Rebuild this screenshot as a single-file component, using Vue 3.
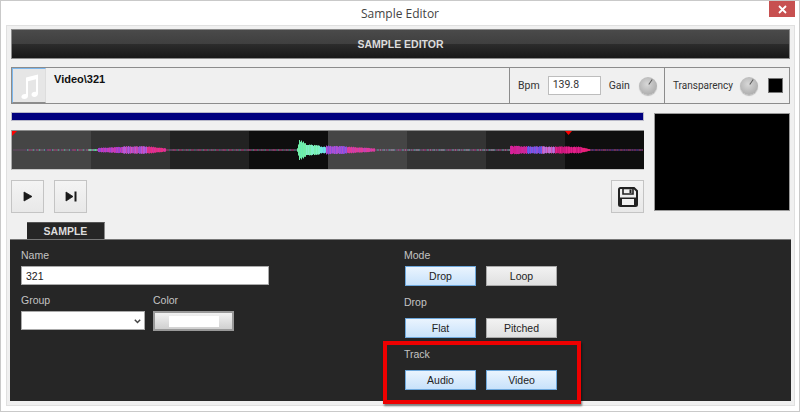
<script setup>
// waveform pieces: start x, end x, amplitude at start, at end, colours (x is px inside the strip)
const pieces = [
  [14, 76, 0.6, 0.6, ['#6a5a6a', '#4a3a70', '#b03070', '#707070', '#50c0a0']],
  [76, 86, 0.7, 1, ['#80d0a8', '#50c090', '#d040b0']],
  [86, 110, 2, 3, ['#c83ab8', '#a040d0', '#c040c0']],
  [110, 135, 3.5, 3.5, ['#a050d0', '#b858d8', '#c848b0']],
  [135, 154, 3.5, 1.5, ['#e0309a', '#d83090', '#e83080']],
  [154, 285, 0.6, 0.6, ['#903060', '#605070', '#b03070', '#707080', '#308070']],
  [285, 288, 2, 13, ['#70f0a8']],
  [288, 294, 9, 6, ['#70f0a8', '#68eeb0']],
  [294, 308, 5.5, 4, ['#78f0b0', '#80f0c8']],
  [308, 314, 3.5, 3, ['#70e8e0', '#70d0f0']],
  [314, 335, 4, 3.5, ['#a050d8', '#8a50e0', '#b050d0']],
  [335, 363, 3.2, 1.5, ['#c840b0', '#d83ca0', '#e03c98']],
  [363, 498, 0.6, 0.6, ['#9a8aa0', '#605070', '#a03070', '#708090', '#50a0a0']],
  [498, 515, 4, 3.5, ['#d02090', '#c82898', '#d8209a']],
  [515, 530, 3.5, 3.5, ['#7050e0', '#6060f0', '#9050d8']],
  [530, 543, 3.5, 3, ['#b060d0', '#c070d8', '#d050b0']],
  [543, 570, 3.5, 3, ['#d01880', '#e02088', '#c81878']],
  [570, 578, 2.5, 0.6, ['#e82078']],
  [578, 631, 0.6, 0.5, ['#903060', '#403080', '#802060', '#302880']]
]

const bars = []
let seed = 7
for (const [x0, x1, a0, a1, colors] of pieces) {
  for (let x = x0; x < x1; x++) {
    seed = (seed * 31 + 11) % 101
    const t = (x - x0) / (x1 - x0)
    const amp = (a0 + (a1 - a0) * t) * (0.85 + (seed % 30) / 100)
    bars.push({ x, y: 19 - amp, h: amp * 2, color: colors[seed % colors.length] })
  }
}
</script>

<template>
  <div class="window">
    <div class="titlebar">
      <span>Sample Editor</span>
      <div class="close">
        <svg width="9" height="9" viewBox="0 0 9 9"><path d="M1 1l7 7M8 1l-7 7" stroke="#fff" stroke-width="1.8" /></svg>
      </div>
    </div>

    <div class="panel">
      <div class="header">SAMPLE EDITOR</div>

      <div class="toolbar">
        <div class="sample-info">
          <button class="note-btn">
            <svg width="20" height="26" viewBox="0 0 20 26">
              <path d="M7 4.500L19 1.500V20.500C19 22.600 17.300 24 15.400 24C13.600 24 12.500 22.900 12.500 21.600C12.500 19.800 14.400 18.600 17 18.900V6.200L9 8.200V23C9 25 7.300 26 5.400 26C3.500 26 2.400 25 2.400 23.700C2.400 21.900 4.400 20.700 7 21Z" fill="#fff" />
            </svg>
          </button>
          <span class="sample-path">Video\321</span>
        </div>
        <div class="bpm-group">
          <span>Bpm</span>
          <input class="bpm-input" value="139.8" />
          <span>Gain</span>
          <div class="knob"><i></i></div>
        </div>
        <div class="trans-group">
          <span>Transparency</span>
          <div class="knob trans-knob"><i></i></div>
          <div class="swatch"></div>
        </div>
      </div>

      <div class="main-row">
        <div class="left-col">
          <div class="blue-bar"></div>
          <div class="wave">
            <div class="wave-bands">
              <div v-for="c in ['b1', 'b2', 'b3', 'b4', 'b1', 'b2', 'b3', 'b4']" :class="c"></div>
            </div>
            <svg class="wave-svg" width="632" height="38" viewBox="0 0 632 38">
              <rect x="1" y="18.500" width="630" height="1" fill="#6a4a68" />
              <rect v-for="b in bars" :key="b.x" :x="b.x" :y="b.y" width="1" :height="b.h" :fill="b.color" />
              <path d="M0 0h5L0 5Z" fill="#f00" />
              <path d="M553 0h7l-3.500 4Z" fill="#f00" />
            </svg>
          </div>
          <div class="transport">
            <div class="transport-left">
              <button class="icon-btn">
                <svg width="10" height="11" viewBox="0 0 10 11"><path d="M1 1L9 5.500L1 10Z" fill="#1a1a1a" stroke="#1a1a1a" stroke-width="0.8" /></svg>
              </button>
              <button class="icon-btn">
                <svg width="12" height="11" viewBox="0 0 12 11"><path d="M1 1L8 5.500L1 10Z" fill="#1a1a1a" stroke="#1a1a1a" stroke-width="0.8" /><rect x="9.500" y="0.500" width="2" height="10" fill="#1a1a1a" /></svg>
              </button>
            </div>
            <button class="icon-btn">
              <svg width="20" height="20" viewBox="0 0 20 20">
                <path d="M2.500 1H16L19 4V17.500C19 18.300 18.300 19 17.500 19H2.500C1.700 19 1 18.300 1 17.500V2.500C1 1.700 1.700 1 2.500 1Z" fill="none" stroke="#222" stroke-width="2" />
                <path d="M5 1.500H15V7H5Z" fill="#f0f0f0" stroke="#222" stroke-width="1.600" />
                <rect x="11.500" y="2.500" width="2" height="3.500" fill="#222" />
                <path d="M1 10.500H19V18H1Z" fill="#222" />
                <rect x="4" y="12" width="12" height="6" fill="#f2f2f2" />
              </svg>
            </button>
          </div>
        </div>
        <div class="preview"></div>
      </div>

      <div class="tab">SAMPLE</div>
      <div class="dark">
        <div class="fields">
          <label class="lbl">Name</label>
          <input class="name-input" value="321" />
          <div class="field-row">
            <div class="field">
              <label class="lbl">Group</label>
              <div class="select-wrap">
                <select class="group-select"></select>
                <svg class="chevron" width="7" height="5" viewBox="0 0 7 5"><path d="M0.800 0.800L3.500 3.500L6.200 0.800" fill="none" stroke="#444" stroke-width="1.500" /></svg>
              </div>
            </div>
            <div class="field">
              <label class="lbl">Color</label>
              <div class="color-btn"><div></div></div>
            </div>
          </div>
        </div>
        <div class="modes">
          <label class="lbl">Mode</label>
          <div class="btn-row">
            <button class="opt on">Drop</button>
            <button class="opt">Loop</button>
          </div>
          <label class="lbl drop-lbl">Drop</label>
          <div class="btn-row">
            <button class="opt on">Flat</button>
            <button class="opt">Pitched</button>
          </div>
          <label class="lbl track-lbl">Track</label>
          <div class="btn-row">
            <button class="opt on">Audio</button>
            <button class="opt on">Video</button>
          </div>
        </div>
      </div>
    </div>

    <div class="highlight"></div>
  </div>
</template>

<style>
html, body {
  margin: 0;
  background: #fff;
}
</style>

<style scoped>
.window {
  position: relative;
  box-sizing: border-box;
  width: 800px;
  height: 412px;
  background: #fff;
  border: 1px solid #c9c9c9;
  overflow: hidden;
  display: flex;
  flex-direction: column;
  font-family: "Liberation Sans", Arial, sans-serif;
  font-size: 11px;
  color: #222;
}

.titlebar {
  position: relative;
  height: 24px;
  flex: none;
  display: flex;
  align-items: center;
  justify-content: center;
  font-family: "Open Sans", sans-serif;
  font-size: 12px;
  color: #444;
}

/* window close sits over the title bar */
.close {
  position: absolute;
  top: 0;
  right: 4px;
  width: 26px;
  height: 16px;
  background: #c75050;
  display: flex;
  align-items: center;
  justify-content: center;
}

.panel {
  flex: 1;
  margin: 0 4px 5px 5px;
  padding: 3px 4px 4px;
  background: #f0f0f0;
  border: 1px solid #e0e0e0;
  display: flex;
  flex-direction: column;
}

.header {
  height: 28px;
  flex: none;
  border: 1px solid #8c8c8c;
  background: linear-gradient(#4a4a4a, #3f3f3f 50%, #2c2c2c 50%, #181818);
  color: #dcdcdc;
  font-size: 10.5px;
  font-weight: bold;
  display: flex;
  align-items: center;
  justify-content: center;
}

.toolbar {
  height: 35px;
  flex: none;
  margin-top: 8px;
  border: 1px solid #8c8c8c;
  display: flex;
}

.sample-info {
  flex: 1;
  display: flex;
  align-items: flex-start;
  gap: 8px;
}

.note-btn {
  width: 34px;
  height: 35px;
  padding: 0;
  flex: none;
  background: #e6e6e6;
  border: 1px solid #7db8ee;
  border-right-color: #ddd;
  border-bottom: 1px solid #8c8c8c;
  display: flex;
  align-items: center;
  justify-content: center;
}

.sample-path {
  margin-top: 5px;
  font-weight: bold;
  color: #111;
}

.bpm-group,
.trans-group {
  flex: none;
  box-sizing: border-box;
  display: flex;
  align-items: center;
  padding-left: 8px;
  border-left: 1px solid #8c8c8c;
  font-family: Roboto, sans-serif;
  color: #333;
}

.bpm-group {
  width: 155px;
  font-size: 10.5px;
}

.trans-group {
  width: 125px;
  font-size: 10px;
}

.bpm-input {
  box-sizing: border-box;
  width: 53px;
  height: 19px;
  margin: 0 8px 0 8px;
  padding: 0 0 3px 4px;
  border: 1px solid #bdbdbd;
  background: #fff;
  font-family: Roboto, sans-serif;
  font-size: 10.5px;
  color: #333;
}

.knob {
  position: relative;
  flex: none;
  width: 18px;
  height: 18px;
  margin-left: 9px;
  border-radius: 50%;
  background: radial-gradient(circle at 45% 40%, #d8d8d8, #b0b0b0 70%, #999);
  box-shadow: 0 1px 1px #bbb;
}

.trans-knob {
  margin-left: 7px;
}

/* pointer mark on the dial */
.knob i {
  position: absolute;
  top: 2px;
  left: 11px;
  width: 1px;
  height: 6px;
  background: #555;
  transform: rotate(35deg);
}

.swatch {
  flex: none;
  box-sizing: border-box;
  width: 15px;
  height: 15px;
  margin-left: 10px;
  background: #000;
  border: 1px solid #777;
}

.main-row {
  display: flex;
  justify-content: space-between;
  margin-top: 8px;
  flex: none;
}

.left-col {
  width: 633px;
}

.blue-bar {
  box-sizing: border-box;
  height: 9px;
  background: #00007f;
  border: 1px solid #b8b8c8;
}

.wave {
  position: relative;
  box-sizing: border-box;
  height: 40px;
  margin-top: 9px;
  border-top: 1px solid #8c8c8c;
  border-bottom: 1px solid #c8c8c8;
  border-left: 1px solid #aaa;
}

.wave-bands {
  height: 100%;
  display: grid;
  grid-template-columns: repeat(8, 1fr);
}

.b1 { background: #454545; }
.b2 { background: #343434; }
.b3 { background: #222; }
.b4 { background: #0e0e0e; }

.wave-svg {
  position: absolute;
  top: 0;
  left: 0;
}

.transport {
  display: flex;
  justify-content: space-between;
  margin-top: 10px;
}

.transport-left {
  display: flex;
  gap: 10px;
}

.icon-btn {
  box-sizing: border-box;
  width: 33px;
  height: 33px;
  padding: 0;
  border: 1px solid #c4c4c4;
  background: linear-gradient(#f4f4f4, #e8e8e8);
  display: flex;
  align-items: center;
  justify-content: center;
}

.preview {
  box-sizing: border-box;
  width: 136px;
  height: 98px;
  margin-top: 1px;
  background: #000;
  border: 1px solid #999;
}

.tab {
  box-sizing: border-box;
  width: 78px;
  height: 17px;
  flex: none;
  margin: 9px 0 0 16px;
  background: #262626;
  border-top: 1px solid #555;
  border-right: 1px solid #888;
  color: #ddd;
  font-size: 10.5px;
  font-weight: bold;
  text-align: center;
  line-height: 17px;
}

.dark {
  flex: 1;
  margin: 0 -1px 0;
  padding: 9px 11px 0;
  background: #262626;
  border-top: 1px solid #777;
  display: flex;
}

.lbl {
  display: block;
  font-size: 10.5px;
  line-height: 13px;
  color: #c4c4c4;
}

.fields {
  width: 383px;
  flex: none;
}

.name-input {
  display: block;
  box-sizing: border-box;
  width: 248px;
  height: 19px;
  margin-top: 4px;
  padding: 0 4px;
  border: 1px solid #aaa;
  background: #fff;
  font-family: "Liberation Sans", Arial, sans-serif;
  font-size: 10.5px;
  color: #222;
}

.field-row {
  display: flex;
  gap: 8px;
  margin-top: 9px;
}

.select-wrap {
  position: relative;
  margin-top: 4px;
}

.group-select {
  display: block;
  box-sizing: border-box;
  width: 124px;
  height: 19px;
  border: 1px solid #aaa;
  border-radius: 0;
  background: #fff;
  appearance: none;
}

.chevron {
  position: absolute;
  right: 4px;
  top: 8px;
}

.color-btn {
  box-sizing: border-box;
  width: 81px;
  height: 20px;
  margin-top: 4px;
  border: 2px solid #999;
  background: linear-gradient(#f2f2f2, #d0d0d0);
  display: flex;
  align-items: center;
  justify-content: center;
}

.color-btn div {
  width: 50px;
  height: 11px;
  background: #fff;
}

.btn-row {
  display: flex;
  gap: 10px;
  margin: 4px 0 0 1px;
}

.drop-lbl {
  margin-top: 10px;
}

.drop-lbl + .btn-row {
  margin-top: 9px;
}

.track-lbl {
  margin-top: 10px;
}

.track-lbl + .btn-row {
  margin-top: 9px;
}

.opt {
  box-sizing: border-box;
  width: 71px;
  height: 20px;
  padding: 0 0 1px;
  border: 1px solid #aaa;
  background: linear-gradient(#f2f2f2, #e0e0e0);
  font-family: "Liberation Sans", Arial, sans-serif;
  font-size: 10.5px;
  color: #222;
}

.opt.on {
  border-color: #6ea8dc;
  background: linear-gradient(#eaf4fe, #c8e2fb);
}

/* annotation drawn over the screenshot */
.highlight {
  position: absolute;
  left: 382px;
  top: 340px;
  width: 190px;
  height: 55px;
  border: 4px solid #ee0000;
  box-shadow: 1px 2px 2px rgba(0, 0, 0, 0.5);
}
</style>
